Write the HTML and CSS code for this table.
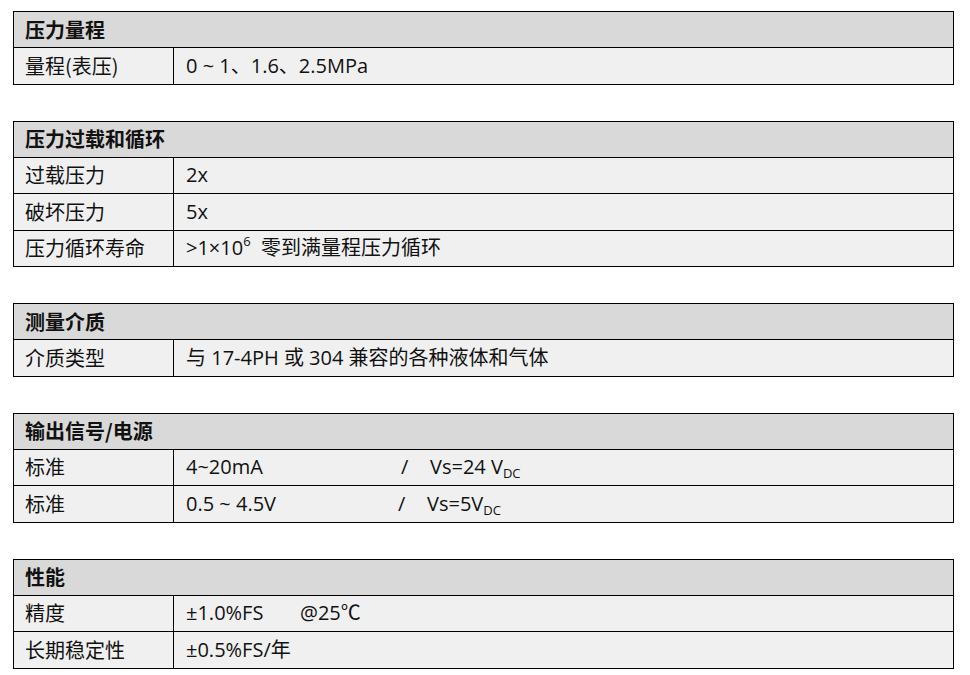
FILE: index.html
```html
<!DOCTYPE html>
<html lang="zh">
<head>
<meta charset="utf-8">
<title>规格参数</title>
<link rel="stylesheet" href="styles.css">
</head>
<body>
<div class="page">
  <table class="spec">
    <tr><th colspan="2">压力量程</th></tr>
    <tr><td class="k">量程(表压)</td><td class="v">0 ~ 1、1.6、2.5MPa</td></tr>
  </table>

  <table class="spec">
    <tr><th colspan="2">压力过载和循环</th></tr>
    <tr><td class="k">过载压力</td><td class="v">2x</td></tr>
    <tr><td class="k">破坏压力</td><td class="v">5x</td></tr>
    <tr><td class="k">压力循环寿命</td><td class="v">&gt;1×10<sup>6</sup>&nbsp; 零到满量程压力循环</td></tr>
  </table>

  <table class="spec">
    <tr><th colspan="2">测量介质</th></tr>
    <tr><td class="k">介质类型</td><td class="v">与 17-4PH 或 304 兼容的各种液体和气体</td></tr>
  </table>

  <table class="spec">
    <tr><th colspan="2">输出信号/电源</th></tr>
    <tr><td class="k">标准</td><td class="v"><span class="sig">4~20mA</span><span class="slash">/</span>Vs=24 V<sub>DC</sub></td></tr>
    <tr><td class="k">标准</td><td class="v"><span class="sig sig2">0.5 ~ 4.5V</span><span class="slash">/</span>Vs=5V<sub>DC</sub></td></tr>
  </table>

  <table class="spec">
    <tr><th colspan="2">性能</th></tr>
    <tr><td class="k">精度</td><td class="v"><span class="acc">±1.0%FS</span>@25℃</td></tr>
    <tr><td class="k">长期稳定性</td><td class="v">±0.5%FS/年</td></tr>
  </table>
</div>
</body>
</html>
```

FILE: styles.css
```css
html, body {
  margin: 0;
  padding: 0;
  background: #ffffff;
}

.page {
  padding: 11px 0 0 13px;
  font-family: "Open Sans", "Noto Sans CJK SC", sans-serif;
  color: #111111;
}

.spec {
  width: 941px;
  border-collapse: collapse;
  margin-bottom: 36px;
  font-size: 20px;
}

.spec th,
.spec td {
  border: 1px solid #000000;
  padding: 0;
  vertical-align: middle;
  line-height: 1;
}

.spec th {
  height: 35px;
  background: #d9d9d9;
  text-align: left;
  font-weight: 700;
  padding-left: 11px;
  font-family: "Noto Sans CJK SC", sans-serif;
}

.spec td {
  height: 35.5px;
  background: #f0f0f0;
}

.spec .k {
  width: 148px;
  padding-left: 11px;
  font-family: "Noto Sans CJK SC", sans-serif;
}

.spec .v {
  padding-left: 12px;
}

sup {
  font-size: 13px;
  vertical-align: 9px;
  line-height: 0;
}

sub {
  font-size: 13px;
  vertical-align: -4px;
  line-height: 0;
}

.sig {
  display: inline-block;
  width: 215px;
}

.sig2 {
  width: 212px;
}

.slash {
  display: inline-block;
  width: 29px;
}

.acc {
  display: inline-block;
  width: 114px;
}
```
